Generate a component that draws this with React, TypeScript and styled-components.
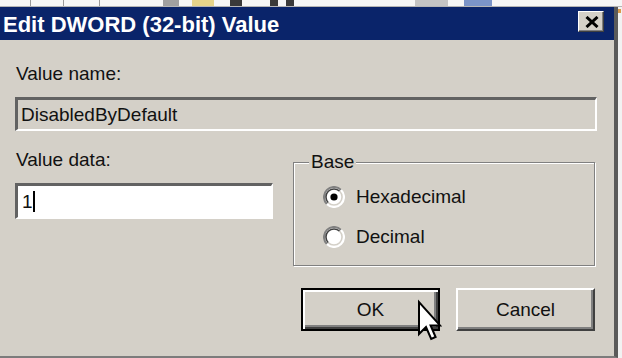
import React from "react";
import styled, { createGlobalStyle } from "styled-components";

const Global = createGlobalStyle`
  html, body { margin: 0; padding: 0; background: #ffffff; }
  body { font-family: "Liberation Sans", Arial, sans-serif; }
`;

const Page = styled.div`
  width: 622px;
  height: 358px;
  overflow: hidden;
  display: flex;
  flex-direction: column;
  background: #f4f4f4;
`;

const TopStrip = styled.div`
  height: 6px;
  flex: none;
  display: flex;
  align-items: stretch;
  background: #f6f6f6;
  border-bottom: 1px solid #b5b5b5;
`;

const Chip = styled.div<{ $w: number; $c: string; $ml: number }>`
  flex: none;
  width: ${(p) => p.$w}px;
  margin-left: ${(p) => p.$ml}px;
  background: ${(p) => p.$c};
`;

const MainRow = styled.div`
  flex: 1;
  display: flex;
  min-height: 0;
`;

const Window = styled.div`
  width: 618px;
  flex: none;
  box-sizing: border-box;
  display: flex;
  flex-direction: column;
  border-right: 4px solid #5a5a5a;
  border-bottom: 2px solid #7c7c7c;
`;

const RightStrip = styled.div`
  flex: 1;
  display: flex;
  flex-direction: column;
  background: #f2f2f2;
`;

const OrangeMark = styled.div`
  margin-top: 2px;
  height: 4px;
  width: 3px;
  background: #d99a4a;
`;

const TitleBar = styled.div`
  height: 33px;
  flex: none;
  display: flex;
  align-items: center;
  justify-content: space-between;
  background: #0a246a;
  padding: 0 10px 0 3px;
`;

const Title = styled.div`
  color: #ffffff;
  font-weight: bold;
  font-size: 22px;
  line-height: 33px;
  padding-top: 2px;
  white-space: nowrap;
`;

const CloseButton = styled.div`
  width: 26px;
  height: 21px;
  margin-top: -4px;
  box-sizing: border-box;
  display: flex;
  align-items: center;
  justify-content: center;
  background: #d4d0c8;
  border: 1px solid;
  border-color: #ffffff #404040 #404040 #ffffff;
  box-shadow: inset -1px -1px 0 #808080;
  padding-left: 1px;
`;

const Body = styled.div`
  flex: 1;
  display: flex;
  flex-direction: column;
  background: #d4d0c8;
  padding: 0 17px 0 15px;
`;

const Label = styled.div<{ $mt?: number }>`
  font-size: 19px;
  line-height: 22px;
  color: #111;
  padding-left: 1px;
  margin-top: ${(p) => p.$mt ?? 0}px;
  white-space: nowrap;
`;

const SunkenField = styled.div<{ $h: number; $bg: string; $mt: number }>`
  height: ${(p) => p.$h}px;
  margin-top: ${(p) => p.$mt}px;
  box-sizing: border-box;
  display: flex;
  align-items: center;
  background: ${(p) => p.$bg};
  border-style: solid;
  border-width: 3px 2px 2px 3px;
  border-color: #626262 #ffffff #ffffff #626262;
  padding-left: 3px;
  font-size: 19px;
  color: #111;
  white-space: nowrap;
`;

const FieldText = styled.span<{ $pl?: number }>`
  padding-left: ${(p) => p.$pl ?? 0}px;
  line-height: 22px;
`;

const Caret = styled.span`
  display: inline-block;
  width: 2px;
  height: 21px;
  background: #000;
`;

const LowerRow = styled.div`
  display: flex;
  justify-content: space-between;
  align-items: flex-start;
  margin-top: 18px;
`;

const LeftCol = styled.div`
  width: 258px;
  display: flex;
  flex-direction: column;
`;

const GroupBox = styled.fieldset`
  width: 302px;
  margin: 2px 2px 0 0;
  box-sizing: border-box;
  padding: 0 0 17px 15px;
  min-width: 0;
  border: 1px solid #808080;
  box-shadow: inset 1px 1px 0 #ffffff, 1px 1px 0 #ffffff;
`;

const Legend = styled.legend`
  padding: 0 2px;
  font-size: 19px;
  line-height: 22px;
  color: #111;
  background: #d4d0c8;
`;

const RadioList = styled.div`
  display: flex;
  flex-direction: column;
  gap: 18px;
  padding-top: 13px;
  padding-left: 14px;
`;

const RadioRow = styled.div`
  display: flex;
  align-items: center;
  gap: 11px;
  height: 22px;
  font-size: 19px;
  color: #111;
`;

const ButtonRow = styled.div`
  display: flex;
  justify-content: flex-end;
  gap: 16px;
  margin-top: 22px;
  padding-right: 2px;
`;

const Button = styled.div<{ $default?: boolean }>`
  position: relative;
  width: 139px;
  height: 43px;
  box-sizing: border-box;
  display: flex;
  align-items: center;
  justify-content: center;
  background: #d4d0c8;
  font-size: 19px;
  color: #111;
  border: 2px solid;
  border-color: ${(p) =>
    p.$default ? "#000000" : "#ffffff #404040 #404040 #ffffff"};
  box-shadow: ${(p) =>
    p.$default
      ? "inset 2px 2px 0 #ffffff, inset -2px -2px 0 #404040, inset -4px -4px 0 #808080"
      : "inset -2px -2px 0 #808080"};
`;

const Cursor = styled.svg`
  position: absolute;
  left: 115px;
  top: 11px;
  overflow: visible;
`;

const Radio: React.FC<{ checked?: boolean }> = ({ checked }) => (
  <svg width="22" height="22" viewBox="0 0 22 22">
    <circle cx="11" cy="11" r="10" fill="#ffffff" />
    <path d="M3.9 18.1 A10 10 0 0 1 18.1 3.9" fill="none" stroke="#808080" strokeWidth="2" />
    <path d="M18.1 3.9 A10 10 0 0 1 3.9 18.1" fill="none" stroke="#ffffff" strokeWidth="2" />
    <path d="M5.3 16.7 A8 8 0 0 1 16.7 5.3" fill="none" stroke="#404040" strokeWidth="1.6" />
    <path d="M16.7 5.3 A8 8 0 0 1 5.3 16.7" fill="none" stroke="#d4d0c8" strokeWidth="1.6" />
    {checked && <circle cx="11" cy="11" r="3.6" fill="#000000" />}
  </svg>
);

export default function App() {
  return (
    <>
      <Global />
      <Page>
        <TopStrip>
          <Chip $w={1} $c="#9a9a9a" $ml={30} />
          <Chip $w={1} $c="#9a9a9a" $ml={32} />
          <Chip $w={1} $c="#9a9a9a" $ml={35} />
          <Chip $w={16} $c="#a0a0a0" $ml={63} />
          <Chip $w={22} $c="#e6d48a" $ml={13} />
          <Chip $w={12} $c="#3a3a3a" $ml={16} />
          <Chip $w={8} $c="#3a3a3a" $ml={28} />
          <Chip $w={8} $c="#3a3a3a" $ml={8} />
          <Chip $w={33} $c="#c4c4c4" $ml={121} />
          <Chip $w={28} $c="#7b94c8" $ml={16} />
        </TopStrip>
        <MainRow>
          <Window>
            <TitleBar>
              <Title>Edit DWORD (32-bit) Value</Title>
              <CloseButton>
                <svg width="14" height="12" viewBox="0 0 14 12">
                  <path d="M1.5 1 L12.5 11 M12.5 1 L1.5 11" stroke="#000" strokeWidth="3" />
                </svg>
              </CloseButton>
            </TitleBar>
            <Body>
              <Label $mt={23}>Value name:</Label>
              <SunkenField $h={34} $bg="#d4d0c8" $mt={12}>
                <FieldText>DisabledByDefault</FieldText>
              </SunkenField>
              <LowerRow>
                <LeftCol>
                  <Label>Value data:</Label>
                  <SunkenField $h={36} $bg="#ffffff" $mt={12}>
                    <FieldText $pl={1}>1</FieldText>
                    <Caret />
                  </SunkenField>
                </LeftCol>
                <GroupBox>
                  <Legend>Base</Legend>
                  <RadioList>
                    <RadioRow>
                      <Radio checked />
                      <span>Hexadecimal</span>
                    </RadioRow>
                    <RadioRow>
                      <Radio />
                      <span>Decimal</span>
                    </RadioRow>
                  </RadioList>
                </GroupBox>
              </LowerRow>
              <ButtonRow>
                <Button $default>
                  OK
                  <Cursor width="24" height="40" viewBox="0 0 12 20">
                    <path
                      d="M0.5 0.5 L0.5 16.5 L4 13 L6.6 19 L8.8 18 L6.3 12.2 L11 12.2 Z"
                      fill="#ffffff"
                      stroke="#000000"
                      strokeWidth="1"
                      strokeLinejoin="miter"
                    />
                  </Cursor>
                </Button>
                <Button>Cancel</Button>
              </ButtonRow>
            </Body>
          </Window>
          <RightStrip>
            <OrangeMark />
          </RightStrip>
        </MainRow>
      </Page>
    </>
  );
}
